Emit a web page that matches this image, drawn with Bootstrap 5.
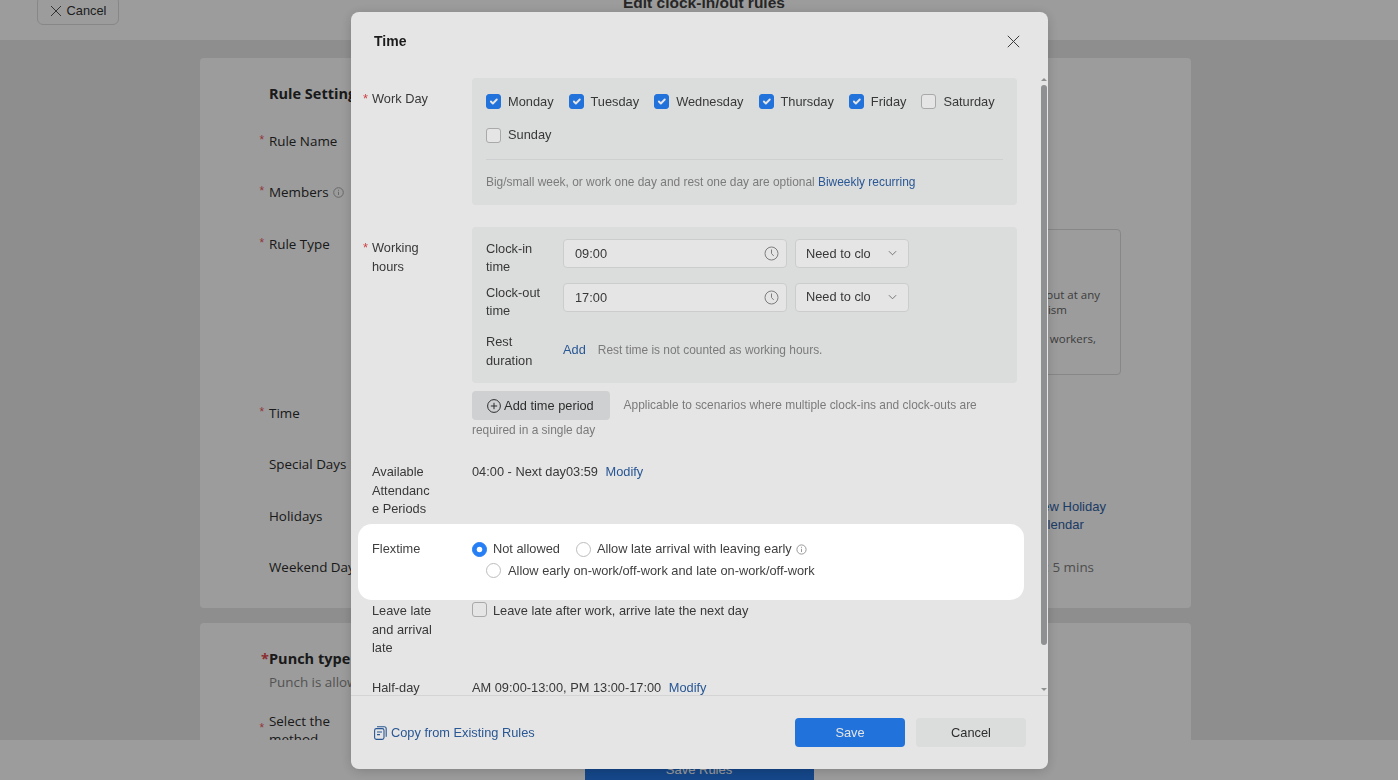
<!DOCTYPE html>
<html lang="en">
<head>
  <meta charset="UTF-8">
  <title>Edit clock-in/out rules</title>
  <link href="https://cdn.jsdelivr.net/npm/bootstrap@5.3.3/dist/css/bootstrap.min.css" rel="stylesheet">
  <style>
    body { font-family: "Liberation Sans", Arial, sans-serif; font-size: 12.8px; color: #3f3f3f; background: #e9e9e9; overflow: hidden; }

    /* page behind the dialog */
    .page-shell { height: 780px; }
    .page-top { height: 40px; background: #fff; overflow: hidden; flex: none; }
    .page-cancel { margin: -4px 0 0 37px; width: 82px; height: 29px; padding: 0; font-size: 12.8px; color: #333; border-color: #ddd; background: #fff; gap: 5px; }
    .page-title { margin: -7px 0 0 504px; font-weight: 700; font-size: 15.5px; line-height: 20px; white-space: nowrap; }
    .page-main { overflow: hidden; flex: 1 1 auto; padding: 18px 207px 0 200px; }
    .page-bottom { height: 40px; background: #fff; overflow: hidden; flex: none; }
    .page-save { display: block; width: 229px; height: 40px; margin: 10px auto 0; padding: 0; border: 0; border-radius: 0; background: #2274e1; color: #fff; font-size: 13px; }
    .rule-card { background: #fff; border-radius: 4px; padding: 26px 70px 15px 69px; font-family: "Open Sans", sans-serif; font-size: 13.4px; color: #2b2b2b; }
    .rule-card + .rule-card { margin-top: 15px; }
    .rule-head { font-weight: 700; font-size: 14.5px; line-height: 20px; margin-bottom: 11.4px; white-space: nowrap; }
    .rule-row { height: 51.4px; white-space: nowrap; }
    .rule-row-tall { height: 169px; }
    .need::before { content: "*"; position: absolute; margin-left: -9.5px; font-family: "Liberation Sans", sans-serif; font-size: 12px; color: #ee5a5e; }
    .need-head::before { content: "*"; position: absolute; margin-left: -8px; color: #e5484d; }
    .type-box { width: 420px; height: 146px; margin-top: 11px; border: 1px solid #ddd; border-radius: 4px; font-size: 11.5px; line-height: 14.5px; color: #666; padding: 58px 20px 0 0; text-align: right; }
    .type-line-2 { padding-right: 33px; }
    .type-line-4 { padding-right: 4px; margin-top: 14.5px; }
    .holiday-link { width: 90px; white-space: normal; font-family: "Liberation Sans", sans-serif; font-size: 13px; line-height: 18px; color: #2f62a6; }
    .late-note { padding-right: 27px; color: #808080; }
    .punch-sub { color: #888; line-height: 20px; margin-top: 3px; }
    .method-row { margin-top: 20px; width: 80px; line-height: 18.4px; white-space: normal; }
    .method-row.need::before { margin-top: 7px; }

    /* dialog */
    .modal-backdrop { --bs-backdrop-opacity: .32; }
    .modal-dialog.time-dialog { width: 697px; max-width: 697px; margin: 12px 0 0 351px; }
    .time-content { height: 757px; border: 0; border-radius: 8px; box-shadow: 0 2px 12px rgba(0,0,0,.18); overflow: hidden; }
    .time-head { height: 64px; flex: none; padding: 0 28px 6px 23px; border: 0; }
    .time-title { font-size: 14px; font-weight: 700; color: #1f1f1f; }
    .time-body { padding: 2px 31px 0 21px; overflow: hidden; line-height: 18.4px; gap: 22px; }
    .field-label { width: 62px; margin-right: 38px; flex: none; overflow-wrap: break-word; color: #3f3f3f; }
    .field-label.pad-label { padding-top: 12.4px; }
    .field-value { flex: 1 1 auto; min-width: 0; }
    .req::before { content: "*"; position: absolute; margin-left: -9px; color: #e5484d; }
    .soft-panel { background: #f4f5f5; border-radius: 4px; }
    .days-panel { padding: 14.5px 14px 13px; }
    .days-line { column-gap: 15px; row-gap: 15px; }
    .days-rule { height: 1px; background: #e6e7e8; margin: 15px 0 13px; }
    .hint-text { font-size: 11.93px; color: #8a8a8a; }
    .blue-link { color: #2f62a6; text-decoration: none; }

    .form-check-input.tick { width: 15px; height: 15px; margin: 0; flex: none; border-color: #bdbdbd; background-color: #fff; }
    .form-check-input.tick[type=checkbox] { border-radius: 3px; }
    .form-check-input.tick:checked { background-color: #267ff4; border-color: #267ff4; }
    .form-check-input.tick[type=radio]:checked { background-size: 85%; }
    .tick-text { margin-left: 7px; }
    .flex-text { margin-left: 6px; }
    .flex-gap { margin-right: 16px; }
    .flex-second { margin: 3px 0 0 14px; }
    .flex-second .flex-text { margin-left: 7px; }

    .hours-panel { padding: 12px 14px 13px; }
    .hours-name { width: 77px; flex: none; padding: 1px 14px 0 0; }
    .time-field { width: 224px; }
    .time-input { height: 29px; padding: 0 30px 0 11px; font-size: 12.8px; color: #3f3f3f; border-color: #e3e4e4; border-radius: 4px; background: #fff; }
    .time-clock { position: absolute; right: 8px; top: 7px; }
    .need-select { width: 114px; height: 29px; margin-left: 8px; padding: 0 38px 0 10px; font-size: 12.8px; color: #3f3f3f; border-color: #e3e4e4; border-radius: 4px; background-color: #fff;
      background-image: url("data:image/svg+xml,%3csvg xmlns='http://www.w3.org/2000/svg' viewBox='0 0 10 6'%3e%3cpath fill='none' stroke='%23777' d='M1 1l4 4 4-4'/%3e%3c/svg%3e"); background-size: 9px 6px; background-position: right 11px center; }
    .hours-gap { height: 6px; }
    .hours-gap-rest { height: 12px; }
    .rest-bit { margin-bottom: 2px; }
    .add-period { height: 29px; width: 138px; padding: 0 1px 0 0; margin-right: 10px; vertical-align: middle; font-size: 12.8px; color: #333; background: #e6e8e9; border: 0; border-radius: 4px; }
    .period-line { line-height: 20px; }
    .period-wrap { margin: 8px 0 1px; }

    .time-foot { height: 74px; flex: none; padding: 0 22px 0 23px; border-top: 1px solid #ededed; flex-wrap: nowrap; }
    .foot-save, .foot-cancel { width: 110px; height: 29px; padding: 0; margin: 0; font-size: 12.8px; border: 0; border-radius: 4px; }
    .foot-save { background: #267ff4; color: #fff; }
    .foot-cancel { background: #f4f5f5; color: #333; margin-left: 11px; }

    /* scrollbar drawn over the dialog edge */
    .bar-track { position: absolute; right: 1px; top: 64px; width: 6px; height: 619px; pointer-events: none; }
    .bar-thumb { position: absolute; left: 0; top: 9px; width: 6px; height: 560px; background: #9fa1a2; border-radius: 3px; }
    .bar-up, .bar-down { position: absolute; left: 0; width: 0; height: 0; border-left: 3px solid transparent; border-right: 3px solid transparent; }
    .bar-up { top: 2px; border-bottom: 3px solid #9fa1a2; }
    .bar-down { bottom: 4px; border-top: 3px solid #9fa1a2; }

    /* tint with the highlighted row cut out */
    .spot-hole { position: fixed; left: 358px; top: 524px; width: 666px; height: 76px; border-radius: 14px; box-shadow: 0 0 0 1600px rgba(0,0,0,.1); z-index: 1060; pointer-events: none; }
  </style>
</head>
<body>

<div class="page-shell d-flex flex-column">
  <div class="page-top d-flex align-items-start">
    <button class="btn page-cancel d-flex align-items-center justify-content-center" type="button">
      <svg width="12" height="12" viewBox="0 0 12 12"><path d="M1 1l10 10M11 1L1 11" stroke="#555" fill="none"/></svg>
      Cancel
    </button>
    <div class="page-title">Edit clock-in/out rules</div>
  </div>

  <div class="page-main">
    <div class="rule-card">
      <div class="rule-head">Rule Settings</div>
      <div class="rule-row d-flex align-items-center"><span class="need">Rule Name</span></div>
      <div class="rule-row d-flex align-items-center"><span class="need">Members</span>
        <svg class="ms-1" width="11" height="11" viewBox="0 0 11 11"><circle cx="5.5" cy="5.5" r="4.8" fill="none" stroke="#aaa"/><path d="M5.5 4.8v3.2M5.5 2.8v1" stroke="#aaa"/></svg>
      </div>
      <div class="rule-row rule-row-tall d-flex align-items-start justify-content-between">
        <span class="need mt-3">Rule Type</span>
        <div class="type-box">
          <div>Clock in and out at any</div>
          <div class="type-line-2">time, no absenteeism</div>
          <div class="type-line-4">Suitable for flexible-hour workers,</div>
        </div>
      </div>
      <div class="rule-row d-flex align-items-center"><span class="need">Time</span></div>
      <div class="rule-row d-flex align-items-center">Special Days</div>
      <div class="rule-row d-flex align-items-center justify-content-between">Holidays <a class="holiday-link text-decoration-none" href="#">View Holiday Calendar</a></div>
      <div class="rule-row d-flex align-items-center justify-content-between">Weekend Days <span class="late-note">Grace time: 5 mins</span></div>
    </div>

    <div class="rule-card">
      <div class="rule-head mb-0"><span class="need-head">Punch type</span></div>
      <div class="punch-sub">Punch is allowed by the following methods</div>
      <div class="method-row need">Select the method</div>
    </div>
  </div>

  <div class="page-bottom">
    <button class="btn page-save" type="button">Save Rules</button>
  </div>
</div>

<div class="modal-backdrop show"></div>

<div class="modal d-block" tabindex="-1">
  <div class="modal-dialog time-dialog">
    <div class="modal-content time-content">
      <div class="modal-header time-head d-flex justify-content-between align-items-center">
        <div class="time-title">Time</div>
        <svg width="13" height="13" viewBox="0 0 13 13"><path d="M.8.8l11.4 11.4M12.2.8L.8 12.2" stroke="#444" fill="none"/></svg>
      </div>

      <div class="modal-body time-body d-flex flex-column">
        <!-- Work day -->
        <div class="d-flex flex-none">
          <div class="field-label pad-label req">Work Day</div>
          <div class="field-value soft-panel days-panel">
            <div class="d-flex flex-wrap days-line" id="dayList"></div>
            <div class="days-rule"></div>
            <div class="hint-text">Big/small week, or work one day and rest one day are optional <a class="blue-link" href="#">Biweekly recurring</a></div>
          </div>
        </div>

        <!-- Working hours -->
        <div class="d-flex flex-none">
          <div class="field-label pad-label req">Working hours</div>
          <div class="field-value">
            <div class="soft-panel hours-panel">
              <div class="d-flex align-items-start">
                <div class="hours-name">Clock-in time</div>
                <div class="time-field position-relative">
                  <input class="form-control time-input" value="09:00">
                  <svg class="time-clock" width="15" height="15" viewBox="0 0 15 15"><circle cx="7.5" cy="7.5" r="6.5" fill="none" stroke="#8c8c8c"/><path d="M7.5 3.5v4l2.2 2.4" fill="none" stroke="#8c8c8c"/></svg>
                </div>
                <select class="form-select need-select"><option>Need to clock in</option></select>
              </div>
              <div class="hours-gap"></div>
              <div class="d-flex align-items-start">
                <div class="hours-name">Clock-out time</div>
                <div class="time-field position-relative">
                  <input class="form-control time-input" value="17:00">
                  <svg class="time-clock" width="15" height="15" viewBox="0 0 15 15"><circle cx="7.5" cy="7.5" r="6.5" fill="none" stroke="#8c8c8c"/><path d="M7.5 3.5v4l2.2 2.4" fill="none" stroke="#8c8c8c"/></svg>
                </div>
                <select class="form-select need-select"><option>Need to clock out</option></select>
              </div>
              <div class="hours-gap-rest"></div>
              <div class="d-flex align-items-center">
                <div class="hours-name">Rest duration</div>
                <a class="blue-link rest-bit me-2" href="#">Add</a>
                <span class="hint-text rest-bit ms-1">Rest time is not counted as working hours.</span>
              </div>
            </div>
            <div class="period-wrap period-line">
              <button class="btn add-period" type="button">
                <svg width="14" height="14" viewBox="0 0 14 14" class="align-text-bottom"><circle cx="7" cy="7" r="6.4" fill="none" stroke="#333"/><path d="M7 3.8v6.4M3.8 7h6.4" stroke="#333"/></svg>
                Add time period
              </button>
              <span class="hint-text">Applicable to scenarios where multiple clock-ins and clock-outs are required in a single day</span>
            </div>
          </div>
        </div>

        <!-- Attendance periods -->
        <div class="d-flex flex-none">
          <div class="field-label">Available Attendance Periods</div>
          <div class="field-value">04:00 - Next day03:59 <a class="blue-link ms-1" href="#">Modify</a></div>
        </div>

        <!-- Flextime -->
        <div class="d-flex flex-none">
          <div class="field-label">Flextime</div>
          <div class="field-value">
            <div class="d-flex align-items-center">
              <input class="form-check-input tick" type="radio" name="flex" checked>
              <span class="flex-text flex-gap">Not allowed</span>
              <input class="form-check-input tick" type="radio" name="flex">
              <span class="flex-text">Allow late arrival with leaving early</span>
              <svg class="ms-1" width="11" height="11" viewBox="0 0 11 11"><circle cx="5.5" cy="5.5" r="4.6" fill="none" stroke="#999"/><path d="M5.5 4.8v3.2M5.5 2.8v1" stroke="#999"/></svg>
            </div>
            <div class="d-flex align-items-center flex-second">
              <input class="form-check-input tick" type="radio" name="flex">
              <span class="flex-text">Allow early on-work/off-work and late on-work/off-work</span>
            </div>
          </div>
        </div>

        <!-- Leave late -->
        <div class="d-flex flex-none">
          <div class="field-label">Leave late and arrival late</div>
          <div class="field-value d-flex align-items-start">
            <input class="form-check-input tick" type="checkbox">
            <span class="flex-text">Leave late after work, arrive late the next day</span>
          </div>
        </div>

        <!-- Half-day -->
        <div class="d-flex flex-none">
          <div class="field-label">Half-day</div>
          <div class="field-value">AM 09:00-13:00, PM 13:00-17:00 <a class="blue-link ms-1" href="#">Modify</a></div>
        </div>
      </div>

      <div class="modal-footer time-foot d-flex align-items-center">
        <a class="blue-link d-flex align-items-center gap-1 m-0 me-auto" href="#">
          <svg width="13" height="14" viewBox="0 0 13 14"><rect x=".6" y="2.6" width="9.4" height="10.8" rx="1.8" fill="none" stroke="#2f62a6" stroke-width="1.1"/><path d="M3 .7h7.2a2 2 0 0 1 2 2v8" fill="none" stroke="#2f62a6" stroke-width="1.1"/><path d="M3 6h5M3 8.6h3" stroke="#2f62a6" stroke-width="1.1"/></svg>
          Copy from Existing Rules
        </a>
        <button class="btn foot-save" type="button">Save</button>
        <button class="btn foot-cancel" type="button">Cancel</button>
      </div>

      <div class="bar-track">
        <div class="bar-up"></div>
        <div class="bar-thumb"></div>
        <div class="bar-down"></div>
      </div>
    </div>
  </div>
</div>

<div class="spot-hole"></div>

<script src="https://cdn.jsdelivr.net/npm/bootstrap@5.3.3/dist/js/bootstrap.bundle.min.js"></script>
<script>
  const days = [
    ['Monday', true], ['Tuesday', true], ['Wednesday', true], ['Thursday', true],
    ['Friday', true], ['Saturday', false], ['Sunday', false]
  ];
  const dayList = document.getElementById('dayList');
  days.forEach(([name, on]) => {
    const item = document.createElement('label');
    item.className = 'd-flex align-items-center';
    item.innerHTML = `<input class="form-check-input tick" type="checkbox" ${on ? 'checked' : ''}><span class="tick-text">${name}</span>`;
    dayList.appendChild(item);
  });
</script>
</body>
</html>
